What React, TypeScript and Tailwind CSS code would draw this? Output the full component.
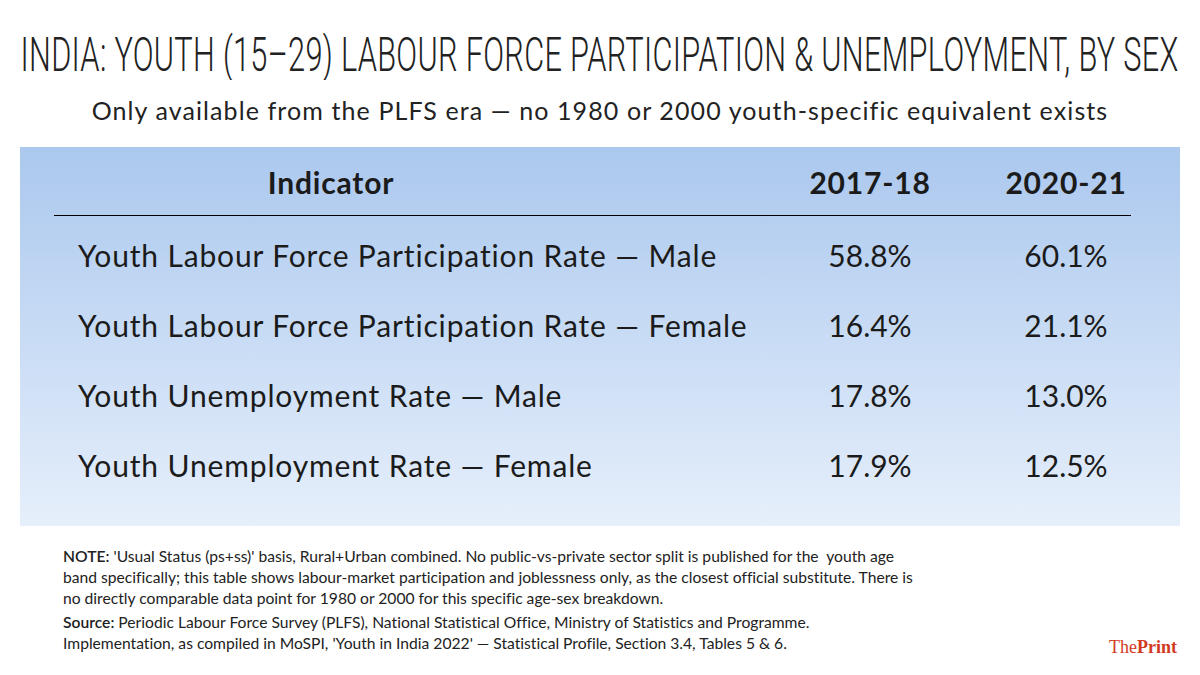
import React from 'react';

const rows = [
  { label: 'Youth Labour Force Participation Rate — Male', a: '58.8%', b: '60.1%' },
  { label: 'Youth Labour Force Participation Rate — Female', a: '16.4%', b: '21.1%' },
  { label: 'Youth Unemployment Rate — Male', a: '17.8%', b: '13.0%' },
  { label: 'Youth Unemployment Rate — Female', a: '17.9%', b: '12.5%' },
];

export default function App() {
  return (
    <div className="w-[1200px] h-[675px] bg-white overflow-hidden flex flex-col text-[#1b1b1b] font-['Lato',sans-serif] [font-variant-ligatures:none]">
      <div className="h-[80px] pt-[30px] flex justify-center overflow-hidden">
        <h1 className="whitespace-nowrap font-['Roboto',sans-serif] font-light text-[49px] leading-[50px] text-[#222] scale-x-[0.627] origin-center tracking-[0.5px]">
          INDIA: YOUTH (15–29) LABOUR FORCE PARTICIPATION &amp; UNEMPLOYMENT, BY SEX
        </h1>
      </div>

      <p className="h-[67px] pt-[13px] text-center text-[25px] leading-[34px] tracking-[1.1px] text-[#222]">
        Only available from the PLFS era — no 1980 or 2000 youth-specific equivalent exists
      </p>

      <div className="mx-[20px] h-[379px] bg-linear-to-b from-[#abc8ee] to-[#e6effb] pl-[34px]">
        <div className="grid grid-cols-[736px_160px_196px] h-[69px] items-center pt-[2px] border-b border-black w-[1077px] text-[30px] font-bold tracking-[0.8px]">
          <div className="w-[554px] text-center">Indicator</div>
          <div className="text-center">2017-18</div>
          <div className="text-center pl-[36px]">2020-21</div>
        </div>
        <div className="pt-[4px]">
          {rows.map((r) => (
            <div key={r.label} className="grid grid-cols-[736px_160px_196px] h-[70px] items-center text-[30px]">
              <div className="pl-[24px] whitespace-nowrap tracking-[0.85px]">{r.label}</div>
              <div className="text-center">{r.a}</div>
              <div className="text-center pl-[36px]">{r.b}</div>
            </div>
          ))}
        </div>
      </div>

      <div className="flex justify-between items-end pl-[63px] pr-[23px] pt-[20px]">
        <div className="text-[15.65px] leading-[21px] text-[#222] whitespace-nowrap">
          <p>
            <span className="font-semibold">NOTE:</span> 'Usual Status (ps+ss)' basis, Rural+Urban combined. No public-vs-private sector split is published for the&nbsp; youth age
            <br />
            band specifically; this table shows labour-market participation and joblessness only, as the closest official substitute. There is
            <br />
            no directly comparable data point for 1980 or 2000 for this specific age-sex breakdown.
          </p>
          <p className="mt-[3px]">
            <span className="font-semibold">Source:</span> Periodic Labour Force Survey (PLFS), National Statistical Office, Ministry of Statistics and Programme.
            <br />
            Implementation, as compiled in MoSPI, 'Youth in India 2022' — Statistical Profile, Section 3.4, Tables 5 &amp; 6.
          </p>
        </div>
        <div className="font-['Liberation_Serif',serif] text-[18px] leading-[21px] text-[#d23a1f] whitespace-nowrap mb-[-4px]">
          The<span className="font-bold">Print</span>
        </div>
      </div>
    </div>
  );
}
